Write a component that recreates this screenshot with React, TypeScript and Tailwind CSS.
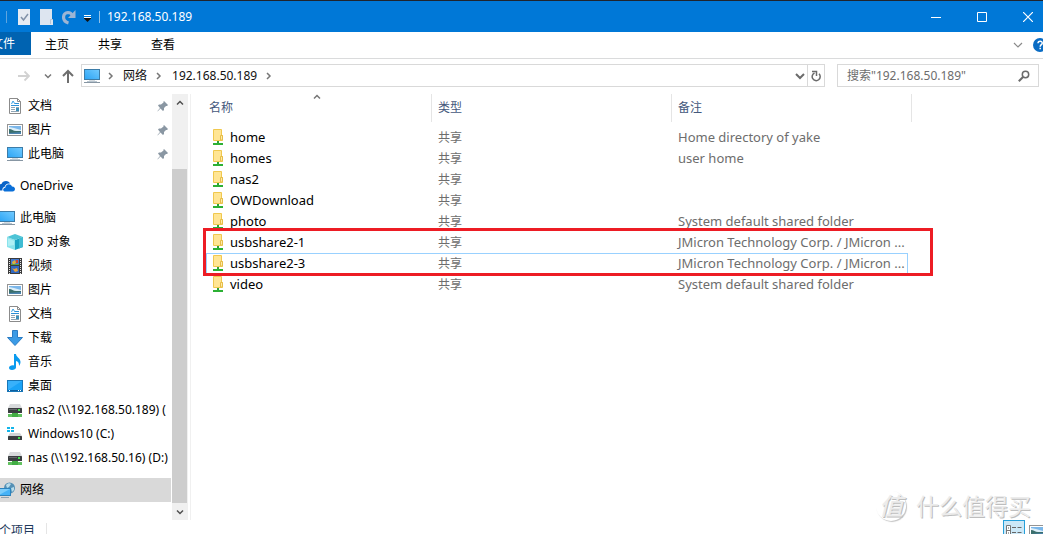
import React from "react";

type IconProps = { className?: string };

const Svg = ({ children, w = 16, h = 16, className = "" }: { children: React.ReactNode; w?: number; h?: number; className?: string }) => (
  <svg width={w} height={h} viewBox={`0 0 ${w} ${h}`} fill="none" aria-hidden="true" className={`shrink-0 ${className}`}>
    {children}
  </svg>
);

const MonitorIcon = ({ className }: IconProps) => (
  <Svg className={className}>
    <defs>
      <linearGradient id="screen" x1="0" y1="1" x2="1" y2="0">
        <stop offset="0" stopColor="#2ba4f5" />
        <stop offset="1" stopColor="#73cbff" />
      </linearGradient>
    </defs>
    <rect x="0.5" y="1.5" width="15" height="10" fill="url(#screen)" stroke="#3c7ca8" />
    <rect x="5" y="12" width="6" height="1" fill="#d5dbe0" />
    <rect x="0" y="14" width="16" height="1" fill="#8796a3" />
    <rect x="3" y="13" width="10" height="1" fill="#b9c6d0" />
  </Svg>
);

const DocIcon = () => (
  <Svg>
    <path d="M2.500.5h8l3 3v12h-11z" fill="#fff" stroke="#8b8b8b" />
    <path d="M10.500.5v3h3" stroke="#8b8b8b" />
    <path d="M8 5.500h4M4 7.500h8" stroke="#2b8fd6" />
    <path d="M4.500 6L6 3l2 3" stroke="#3aa0e4" />
    <path d="M4 9.500h4M4 11.500h4M4 13.500h8M9 9.500h3" stroke="#8fa5b5" />
    <rect x="9" y="10" width="3" height="3" fill="#3d8fb8" />
  </Svg>
);

const PictureIcon = () => (
  <Svg>
    <rect x="0.5" y="2.500" width="15" height="11" fill="#fff" stroke="#949494" />
    <rect x="2" y="4" width="12" height="8" fill="#7bb7ea" />
    <path d="M2 5l5 1 7 2v2H2z" fill="#dceef9" />
    <path d="M2 7c3 0 4 2 7 2h5v2H2z" fill="#3b6f6c" />
    <path d="M2 11l12-1v2H2z" fill="#4b83ae" />
  </Svg>
);

const CubeIcon = () => (
  <Svg>
    <path d="M0 3l8 3v10l-8-3z" fill="#8be3ec" />
    <path d="M8 6l8-3v10l-8 3z" fill="#1ba3c2" />
    <path d="M12 4.500l4-1.500v10l-4 1.500z" fill="#3fbcd3" />
    <path d="M0 3l8-3 8 3-8 3z" fill="#4dc4d6" />
    <path d="M1 4.500l6 2.300V11L1 12z" fill="#aeeff4" />
  </Svg>
);

const VideoIcon = () => (
  <Svg>
    <rect x="1" y="0" width="14" height="16" fill="#3b3b3b" />
    <path d="M2.500 1v15M13.500 1v15" stroke="#e8e8e8" strokeDasharray="1 1" />
    <rect x="4" y="1" width="8" height="6" fill="#3f78d0" />
    <rect x="4" y="8" width="8" height="7" fill="#2f67c2" />
    <path d="M9 2h2v3H9z" fill="#d5432e" />
    <path d="M5 4l3-2 1 3-3 2z" fill="#e0b13c" />
    <path d="M5 10l2 1 3-1 1 3-3 1z" fill="#e9a33b" />
    <path d="M4 6.500h8" stroke="#5a9f45" />
  </Svg>
);

const DownloadIcon = () => (
  <Svg>
    <path d="M5.500.5h5v7h5L8 15.500.5 7.500h5z" fill="#3b9be6" stroke="#2b7cc4" />
  </Svg>
);

const MusicIcon = () => (
  <Svg>
    <path d="M7 0h2c0 3 4.500 4 4.500 8 0 2-1 3-1.500 4 .3-3-1-4.500-3-5v6.500C9 15 7 16 5 16c-1.700 0-3-.8-3-2.200C2 12 4.500 11 7 11.500z" fill="#0a9bef" />
  </Svg>
);

const DesktopIcon = () => (
  <Svg>
    <rect x="0.5" y="2.500" width="15" height="11" fill="#1aa3f7" stroke="#1877b8" />
    <path d="M1 3h14L1 12z" fill="#38b1fb" />
    <path d="M1 12.500h14" stroke="#0c5f9f" />
    <path d="M2 12.500h1M11 12.500h1M13 12.500h1" stroke="#fff" />
  </Svg>
);

const NetDriveIcon = () => (
  <Svg>
    <path d="M3 2h10l2 4H1z" fill="#d7d9db" />
    <rect x="1" y="6" width="14" height="5" rx="0.5" fill="#3a3d40" />
    <rect x="2" y="7" width="8" height="1" fill="#64686b" />
    <rect x="11" y="7" width="2" height="2" fill="#3fe04a" />
    <path d="M6 11h4v1H6z" fill="#46b649" />
    <path d="M1 12h14v3H1z" fill="#62c160" />
    <path d="M5 11h6v4H5z" fill="#42ad44" />
  </Svg>
);

const WinDriveIcon = () => (
  <Svg>
    <path d="M0 1h3v2H0zM4 1h3v2H4zM0 4h3v2H0zM4 4h3v2H4z" fill="#13b5ea" />
    <path d="M3 7h10l2 3H1z" fill="#d0d3d5" />
    <rect x="1" y="10" width="14" height="4" rx="0.5" fill="#3a3d40" />
    <rect x="11" y="11" width="2" height="2" fill="#3fe04a" />
  </Svg>
);

const OneDriveIcon = () => (
  <Svg className="-ml-px">
    <path d="M0 11V8c0-1 1-2 2.500-2C3 4 5 3 7 3c2 0 3.500 1 4 2.500C8 5 6 7 5.500 9 4 9 3 11 3.500 12.500H2C.5 12.500 0 12 0 11z" fill="#0a64c8" />
    <path d="M6.500 13.500C3.500 13.500 3.500 10 6.300 9.700 6.500 6 11.500 5 13 8.500c2.500 0 3 1.500 3 2.500s-.8 2.500-2.500 2.500z" fill="#0a6fd8" />
  </Svg>
);

const NetworkIcon = () => (
  <Svg className="-ml-px">
    <circle cx="10.500" cy="6" r="5.500" fill="#5590b5" />
    <path d="M7 3c2-2 4-2 5-1l-2 3-2 1zM12 6l3-1v3l-2 2z" fill="#b9dcea" />
    <rect x="-0.500" y="6.500" width="12" height="7" fill="#45b2f7" stroke="#2c83bd" />
    <path d="M0 13V7h11z" fill="#7accfb" />
    <path d="M2 15.500h8" stroke="#8fa2b0" />
  </Svg>
);

const PinIcon = () => (
  <Svg w={12} h={12} className="text-[#8a97a3]">
    <path d="M7 1l4 4-1 1-1 0-2 2 0 2-1 1-2.500-2.500L.5 11.500.5 11 3 8 1 5.500l1-1h2l2.500-2V1.500z" fill="currentColor" />
  </Svg>
);

const SharedFolderIcon = () => (
  <Svg w={12} h={16}>
    <path d="M1.500.5h8v6h1v5h-9z" fill="#ffe594" stroke="#f0c84e" />
    <path d="M8.500 11v-4.500h2V11z" fill="#ffeaa8" stroke="#e6bd48" />
    <path d="M5 12h2v2H5z" fill="#2fa336" />
    <path d="M1 14h10v2H1z" fill="#2cb034" />
  </Svg>
);

const Chevron = ({ dir, className = "" }: { dir: "right" | "down" | "up"; className?: string }) => (
  <Svg w={8} h={8} className={className}>
    <path d={dir === "right" ? "M2 1l3 3-3 3" : dir === "down" ? "M1 2.500l3 3 3-3" : "M1 5.500l3-3 3 3"} stroke="currentColor" strokeWidth="1.500" />
  </Svg>
);

type NavItem = { label: string; icon: React.ReactNode; pinned?: boolean; root?: boolean; active?: boolean };

const navGroups: NavItem[][] = [
  [
    { label: "文档", icon: <DocIcon />, pinned: true },
    { label: "图片", icon: <PictureIcon />, pinned: true },
    { label: "此电脑", icon: <MonitorIcon />, pinned: true },
  ],
  [{ label: "OneDrive", icon: <OneDriveIcon />, root: true }],
  [
    { label: "此电脑", icon: <MonitorIcon className="-ml-px" />, root: true },
    { label: "3D 对象", icon: <CubeIcon /> },
    { label: "视频", icon: <VideoIcon /> },
    { label: "图片", icon: <PictureIcon /> },
    { label: "文档", icon: <DocIcon /> },
    { label: "下载", icon: <DownloadIcon /> },
    { label: "音乐", icon: <MusicIcon /> },
    { label: "桌面", icon: <DesktopIcon /> },
    { label: "nas2 (\\\\192.168.50.189) (", icon: <NetDriveIcon /> },
    { label: "Windows10 (C:)", icon: <WinDriveIcon /> },
    { label: "nas (\\\\192.168.50.16) (D:)", icon: <NetDriveIcon /> },
  ],
  [{ label: "网络", icon: <NetworkIcon />, root: true, active: true }],
];

type Share = { name: string; note: string; focused?: boolean };

const shares: Share[] = [
  { name: "home", note: "Home directory of yake" },
  { name: "homes", note: "user home" },
  { name: "nas2", note: "" },
  { name: "OWDownload", note: "" },
  { name: "photo", note: "System default shared folder" },
  { name: "usbshare2-1", note: "JMicron Technology Corp. / JMicron ..." },
  { name: "usbshare2-3", note: "JMicron Technology Corp. / JMicron ...", focused: true },
  { name: "video", note: "System default shared folder" },
];

function TitleBar() {
  return (
    <header className="flex h-8 shrink-0 items-center border-t border-[#20242c] bg-[#0078d7] text-white">
      <span className="ml-1.5 h-3 w-px bg-[#5ea5df]" />
      <button aria-label="属性" className="ml-[11px]">
        <Svg w={12} h={16}>
          <path d="M0 0h12v16H0z" fill="#e6ebf2" />
          <path d="M3 8l2.500 3L10 5" stroke="#8292a8" strokeWidth="1.500" />
        </Svg>
      </button>
      <button aria-label="新建文件夹" className="ml-2.5">
        <Svg w={13} h={16}>
          <path d="M0 0h12v10h1v6H0z" fill="#dde5f0" />
          <path d="M10.500 15v-4.500H13" stroke="#b8c5d6" />
        </Svg>
      </button>
      <button aria-label="重做" className="ml-[9px]">
        <Svg w={14} h={16}>
          <path d="M6.500 14C-.5 12 .5 4 6 3.500c2.500 0 3.500 1 4.500 3" stroke="#9db5d4" strokeWidth="3.200" />
          <path d="M13.500 1v8H6z" fill="#9db5d4" />
        </Svg>
      </button>
      <button aria-label="自定义快速访问工具栏" className="ml-2">
        <Svg w={7} h={8} className="mt-1">
          <path d="M0 .5h7" stroke="#fff" />
          <path d="M0 2.500h7v1L3.500 7 0 3.500z" fill="#111" />
          <path d="M0 2.500h7" stroke="#fff" />
        </Svg>
      </button>
      <span className="ml-2 h-3 w-px bg-[#8fc0e8]" />
      <h1 className="ml-[7px] flex-1 text-xs">192.168.50.189</h1>
      <button aria-label="最小化" className="flex h-full w-[46px] items-center justify-center">
        <Svg w={10} h={10}><path d="M0 5.500h10" stroke="#fff" /></Svg>
      </button>
      <button aria-label="最大化" className="flex h-full w-[46px] items-center justify-center">
        <Svg w={10} h={10}><path d="M.5.5h9v9h-9z" stroke="#fff" /></Svg>
      </button>
      <button aria-label="关闭" className="flex h-full w-[38px] items-center justify-end pr-2.5">
        <Svg w={10} h={10}><path d="M0 0l10 10M10 0L0 10" stroke="#fff" strokeWidth="1.200" /></Svg>
      </button>
    </header>
  );
}

function Ribbon() {
  return (
    <nav className="flex h-[27px] shrink-0 items-stretch border-b border-[#dadbdc]">
      <button className="mb-[3px] flex w-[31px] justify-end overflow-hidden whitespace-nowrap bg-[#0063b1] pr-4 leading-6 text-white">文件</button>
      <div className="ml-3.5 flex gap-[29px] pb-px">
        <button>主页</button>
        <button>共享</button>
        <button>查看</button>
      </div>
      <button aria-label="展开功能区" className="ml-auto text-[#8a8a8a]">
        <Svg w={10} h={8}><path d="M1 2l4 4 4-4" stroke="currentColor" strokeWidth="1.200" /></Svg>
      </button>
      <button aria-label="帮助" className="ml-2.5 w-2.5 overflow-hidden">
        <Svg w={14} h={14}>
          <circle cx="7" cy="7" r="7" fill="#0a6cc4" />
          <path d="M5 5.300c0-3 4.500-2.500 4.200 0C9 6.800 7.200 6.700 7.200 8.700M7.200 9.800v1.500" stroke="#fff" strokeWidth="1.500" />
        </Svg>
      </button>
    </nav>
  );
}

function AddressRow() {
  return (
    <div className="flex h-[35px] shrink-0 items-center pb-0.5 pr-1">
      <button aria-label="前进" className="ml-[18px] text-[#d2d2d2]">
        <Svg w={12} h={12}><path d="M0 6h11M6.500 1.500L11 6l-4.500 4.500" stroke="currentColor" strokeWidth="1.800" /></Svg>
      </button>
      <button aria-label="最近浏览的位置" className="ml-3.5 text-[#777]">
        <Chevron dir="down" />
      </button>
      <button aria-label="上移" className="ml-2.5 text-[#6e6e6e]">
        <Svg w={12} h={14}><path d="M6 14V2M1 7l5-5 5 5" stroke="currentColor" strokeWidth="2" /></Svg>
      </button>
      <div className="ml-[7px] flex h-[23px] flex-1 items-center border border-[#d9d9d9] text-[#111]">
        <MonitorIcon className="ml-0.5" />
        <Chevron dir="right" className="ml-[7px] text-[#777]" />
        <a href="#network" className="ml-2">网络</a>
        <Chevron dir="right" className="ml-2 text-[#777]" />
        <a href="#host" className="ml-[9px]">192.168.50.189</a>
        <Chevron dir="right" className="ml-2 text-[#777]" />
        <button aria-label="以前的位置" className="ml-auto mr-0.5 text-[#6b6b6b]">
          <Svg w={10} h={8}><path d="M1 2l4 4 4-4" stroke="currentColor" strokeWidth="2" /></Svg>
        </button>
        <button aria-label="刷新" className="flex h-full w-[17px] items-center justify-center border-l border-[#d9d9d9] text-[#6b6b6b]">
          <Svg w={10} h={12}>
            <path d="M8 3.800A4 4 0 1 1 3.500 3" stroke="currentColor" strokeWidth="1.500" />
            <path d="M1 1.500h4.500V6" stroke="currentColor" strokeWidth="1.500" />
          </Svg>
        </button>
      </div>
      <label className="ml-3 flex h-[23px] w-[202px] items-center border border-[#d9d9d9] pl-[9px] pr-2">
        <input aria-label="搜索" placeholder='搜索"192.168.50.189"' className="min-w-0 flex-1 bg-transparent outline-none placeholder:text-[#6d6d6d]" />
        <Svg w={12} h={12} className="text-[#6b6b6b]">
          <circle cx="7.500" cy="4.500" r="3.200" stroke="currentColor" strokeWidth="1.500" />
          <path d="M5 7L.8 11.200" stroke="currentColor" strokeWidth="2" />
        </Svg>
      </label>
    </div>
  );
}

function Sidebar() {
  return (
    <aside className="flex w-[191px] shrink-0 border-r border-[#f0f0f0]">
      <nav className="flex w-[172px] flex-col gap-2 pb-[18px]">
        {navGroups.map((group, i) => (
          <ul key={i}>
            {group.map((item) => (
              <li key={item.label} className={item.active ? "mr-px bg-[#d9d9d9]" : ""}>
                <a href="#item" className={`flex h-6 items-center gap-[5px] whitespace-nowrap ${item.root ? "" : "pl-[7px]"}`}>
                  {item.icon}
                  <span>{item.label}</span>
                  {item.pinned && <span className="ml-auto pr-[3px]"><PinIcon /></span>}
                </a>
              </li>
            ))}
          </ul>
        ))}
      </nav>
      <div className="flex w-4 flex-col bg-[#f0f0f0] text-[#505050]">
        <button aria-label="向上滚动" className="flex h-[18px] items-center justify-center"><Chevron dir="up" /></button>
        <div className="mt-[57px] mr-px flex-1 bg-[#cdcdcd]" />
        <button aria-label="向下滚动" className="flex h-[17px] items-center justify-center"><Chevron dir="down" /></button>
      </div>
    </aside>
  );
}

function FileList() {
  return (
    <main className="min-w-0 flex-1 pl-[15px]">
      <div className="relative w-[706px]">
        <Chevron dir="up" className="absolute left-[107px] -top-px text-[#777]" />
        <table className="w-full table-fixed border-separate border-spacing-0 text-left">
          <colgroup>
            <col className="w-[226px]" />
            <col className="w-[240px]" />
            <col className="w-[236px]" />
            <col />
          </colgroup>
          <thead className="text-[#44587c]">
            <tr className="h-7">
              <th className="border-r border-[#e5e5e5] pl-[3px] font-normal">名称</th>
              <th className="border-r border-[#e5e5e5] pl-1.5 font-normal">类型</th>
              <th className="pl-1.5 font-normal">备注</th>
              <th className="border-r border-[#e5e5e5] p-0" />
            </tr>
          </thead>
          <tbody className="text-[#6d6d6d]">
            <tr className="h-[5px]"><td colSpan={4} /></tr>
            {shares.map((s) => {
              const edge = s.focused ? "border-[#99d1ff]" : "border-transparent";
              return (
                <tr key={s.name} className="h-[21px] whitespace-nowrap">
                  <td className={`border-y border-l ${edge} pb-0.5 pl-[5px] text-black`}>
                    <span className="flex items-center gap-1.5"><SharedFolderIcon /><span className="text-[13px] leading-4">{s.name}</span></span>
                  </td>
                  <td className={`border-y ${edge} pl-1.5`}>共享</td>
                  <td className={`border-y border-r ${edge} pb-0.5 pl-1.5 text-[13px] leading-4`}>{s.note}</td>
                  <td className="p-0" />
                </tr>
              );
            })}
          </tbody>
        </table>
        <div className="pointer-events-none absolute -left-[3px] top-[134px] h-[48px] w-[730px] border-[3px] border-[#ed1c24]" />
      </div>
    </main>
  );
}

function StatusBar() {
  return (
    <footer className="flex h-[22px] shrink-0 items-center text-[#1e395b]">
      <span className="flex w-[35px] justify-end whitespace-nowrap">8 个项目</span>
      <span className="ml-[11px] h-4 w-px bg-[#e5e5e5]" />
      <button aria-label="详细信息" className="ml-auto flex h-full w-[22px] justify-center border border-[#26a0da] bg-[#cce8f7] pt-1">
        <Svg w={16} h={12}>
          <path d="M.5.5h4v10h-4zM.5 5.500h4" fill="#fff" stroke="#777" />
          <path d="M2 3h1M2 8h1" stroke="#555" />
          <path d="M6 2.500h4M11.500 2.500h4M6 7.500h4M11.500 7.500h4" stroke="#666" />
        </Svg>
      </button>
      <button aria-label="大图标" className="ml-1 w-3.5 self-start overflow-hidden pt-[3px]"><PictureIcon /></button>
    </footer>
  );
}

function Watermark() {
  return (
    <div className="pointer-events-none absolute bottom-3 right-3 flex items-center gap-2.5 text-[#ececec] [text-shadow:1px_1px_0_#bdbdbd]">
      <span className="flex size-[30px] items-center justify-center rounded-full text-2xl font-medium italic leading-none shadow-[1px_1px_1px_#c4c4c4]">值</span>
      <span className="text-[23px] leading-8">什么值得买</span>
    </div>
  );
}

export default function App() {
  return (
    <div className="relative flex h-screen flex-col overflow-hidden bg-white font-['Noto_Sans','Noto_Sans_CJK_SC',sans-serif] text-xs text-black">
      <TitleBar />
      <Ribbon />
      <AddressRow />
      <div className="flex shrink-0">
        <Sidebar />
        <FileList />
      </div>
      <StatusBar />
      <Watermark />
    </div>
  );
}
